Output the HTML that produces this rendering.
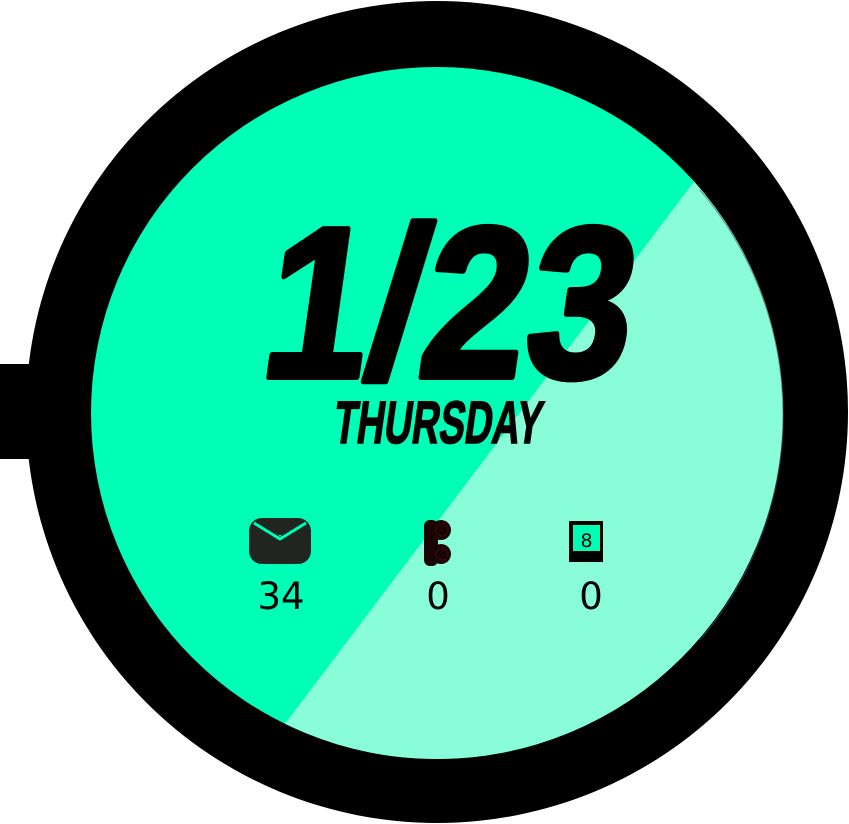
<!DOCTYPE html>
<html><head><meta charset="utf-8"><style>
html,body{margin:0;padding:0;background:#fff;width:849px;height:824px;overflow:hidden}
svg{display:block;position:absolute;left:0;top:0}
</style></head><body>
<svg width="849" height="824" viewBox="0 0 849 824" xmlns="http://www.w3.org/2000/svg">
<defs><clipPath id="c"><circle cx="437" cy="413" r="346"/></clipPath></defs>
<rect x="0" y="364" width="60" height="95" fill="#000"/>
<circle cx="437" cy="412" r="411" fill="#000"/>
<g clip-path="url(#c)">
<rect x="0" y="0" width="849" height="824" fill="#00ffb6"/>
<polygon points="693,183 900,-90 900,900 100,900 288,720" fill="#88fdd8"/>
</g>
<path d="M 700 190 A 346 346 0 0 1 700 640" fill="none" stroke="#555" stroke-width="1.2" opacity="0.6"/>
<g transform="skewX(-8)">
<text x="310" y="377" font-family="Liberation Sans, sans-serif" font-weight="bold" font-size="215" textLength="368" lengthAdjust="spacingAndGlyphs" fill="#000" stroke="#000" stroke-width="6" stroke-linejoin="round">1/23</text>
<text x="394" y="443" font-family="Liberation Sans, sans-serif" font-weight="bold" font-size="60" textLength="208" lengthAdjust="spacingAndGlyphs" fill="#000" stroke="#000" stroke-width="1.5">THURSDAY</text>
</g>
<rect x="249" y="518" width="62" height="46" rx="13" fill="#20251f"/>
<polyline points="254,523 280,539 306,523" fill="none" stroke="#00ffb6" stroke-width="3"/>
<circle cx="280" cy="537" r="1.5" fill="none" stroke="#00ffb6" stroke-width="1"/>
<rect x="424" y="520" width="14" height="46" rx="6" fill="#1a0505"/>
<circle cx="441" cy="530" r="10" fill="#1a0505"/>
<circle cx="441" cy="554" r="10" fill="#1a0505"/>
<circle cx="442" cy="530" r="6" fill="none" stroke="#3a0a0a" stroke-width="1.2"/>
<circle cx="442" cy="554" r="6" fill="none" stroke="#3a0a0a" stroke-width="1.2"/>
<rect x="569" y="521" width="34" height="41" fill="#000"/>
<rect x="573" y="525" width="27" height="26" fill="#00ffb6"/>
<text x="586.5" y="547" text-anchor="middle" font-family="DejaVu Sans, sans-serif" font-size="19" fill="#000">8</text>
<g font-family="DejaVu Sans, sans-serif" font-size="37" fill="#000" text-anchor="middle">
<text x="281" y="609">34</text>
<text x="438" y="609">0</text>
<text x="591" y="609">0</text>
</g>
</svg>
</body></html>
